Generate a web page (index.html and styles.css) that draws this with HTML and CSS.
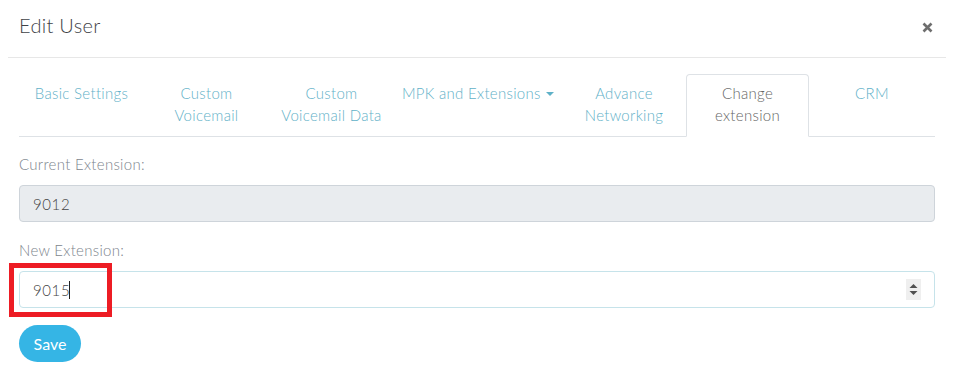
FILE: index.html
```html
<!DOCTYPE html>
<html lang="en">
<head>
<meta charset="utf-8">
<title>Edit User</title>
<link rel="stylesheet" href="styles.css">
</head>
<body>
<div class="modal">
  <div class="modal-header">
    <h4 class="modal-title">Edit User</h4>
    <button class="close" type="button" aria-label="Close">
      <svg width="11" height="11" viewBox="0 0 11 11"><path d="M1.5 1.5 L9.5 9.5 M9.5 1.5 L1.5 9.5" stroke="#6e6e6e" stroke-width="2.6" stroke-linecap="butt"/></svg>
    </button>
  </div>
  <div class="modal-body">
    <ul class="nav-tabs">
      <li class="tab t1"><a>Basic Settings</a></li>
      <li class="tab t2"><a>Custom<br>Voicemail</a></li>
      <li class="tab t3"><a>Custom<br>Voicemail Data</a></li>
      <li class="tab t4"><a>MPK and Extensions <span class="caret"></span></a></li>
      <li class="tab t5"><a>Advance<br>Networking</a></li>
      <li class="tab t6 active"><a>Change<br>extension</a></li>
      <li class="tab t7"><a>CRM</a></li>
    </ul>
    <div class="form-group first">
      <label class="label">Current Extension:</label>
      <input class="form-control disabled" type="text" value="9012" readonly>
    </div>
    <div class="form-group">
      <label class="label">New Extension:</label>
      <div class="input-wrap">
        <input class="form-control focus" type="text" value="9015">
        <span class="text-caret"></span>
        <span class="spinner">
          <svg width="15" height="21" viewBox="0 0 15 21"><rect width="15" height="21" fill="#efefef"/><path d="M3.5 9 L7.5 5 L11.5 9 Z" fill="#505050"/><path d="M3.5 12 L11.5 12 L7.5 16 Z" fill="#505050"/></svg>
        </span>
        <span class="highlight"></span>
      </div>
    </div>
    <button class="btn-save" type="button">Save</button>
  </div>
</div>
</body>
</html>
```
FILE: styles.css
```css
* { box-sizing: border-box; }
html, body { margin: 0; padding: 0; background: #ffffff; }
body {
  font-family: Lato, "Open Sans", "Noto Sans", sans-serif;
  font-size: 15px;
  font-weight: 300;
  letter-spacing: 0.3px;
  color: #555;
}
.modal { width: 957px; height: 379px; overflow: hidden; }
.modal-header {
  margin: 0 11px 0 8px;
  height: 58px;
  border-bottom: 1px solid #e7e7e7;
  display: flex;
  align-items: center;
  justify-content: space-between;
  padding: 0 13px 8px 11px;
}
.modal-title {
  margin: 0;
  font-size: 20px;
  font-weight: 300;
  color: #3f4247;
  letter-spacing: 0.3px;
}
.close {
  border: 0;
  background: none;
  padding: 0;
  display: flex;
  margin-top: 6px;
}
.modal-body { padding: 16px 22px 0 19px; }
.nav-tabs {
  list-style: none;
  margin: 0;
  padding: 0;
  display: grid;
  grid-template-columns: 125px 125px 125px 168px 124px 123px 126px;
  border-bottom: 1px solid #dee2e6;
}
.tab { text-align: center; margin-bottom: -1px; }
.tab a {
  display: block;
  height: 63px;
  padding: 7px 2px 0;
  line-height: 22px;
  color: #5fb1c8;
  border: 1px solid transparent;
  border-top-left-radius: 4px;
  border-top-right-radius: 4px;
}
.tab.active a {
  color: #666;
  border-color: #dee2e6 #dee2e6 #fff;
  background: #fff;
}
.caret {
  display: inline-block;
  width: 0; height: 0;
  border-left: 4px solid transparent;
  border-right: 4px solid transparent;
  border-top: 4px solid #5fb1c8;
  vertical-align: 3px;
  margin-left: 1px;
}
.form-group { margin-top: 18px; }
.form-group.first { margin-top: 17px; }
.label {
  display: block;
  line-height: 21px;
  color: #7d858d;
  margin-bottom: 10px;
}
.form-control {
  display: block;
  width: 100%;
  height: 37px;
  padding: 0 13px;
  font: inherit;
  font-size: 15px;
  letter-spacing: 0.6px;
  color: #444;
  border: 1px solid #ced4da;
  border-radius: 4px;
  background: #fff;
  outline: none;
}
.form-control.disabled { background: #e9ecef; }
.form-control.focus { border-color: #c6e3ea; }
.input-wrap { position: relative; }
.text-caret {
  position: absolute;
  left: 50px; top: 10px;
  width: 1px; height: 18px;
  background: #222;
}
.spinner {
  position: absolute;
  right: 14px; top: 8px;
  display: flex;
}
.highlight {
  position: absolute;
  left: -10px; top: -8px;
  width: 103px; height: 54px;
  border: 5px solid #ed1c24;
}
.btn-save {
  margin-top: 17px;
  height: 37px;
  width: 62px;
  border: 0;
  border-radius: 19px;
  background: #35b5e5;
  color: #fff;
  font: inherit;
  font-size: 16px;
  font-weight: 400;
  padding: 0;
}
```
